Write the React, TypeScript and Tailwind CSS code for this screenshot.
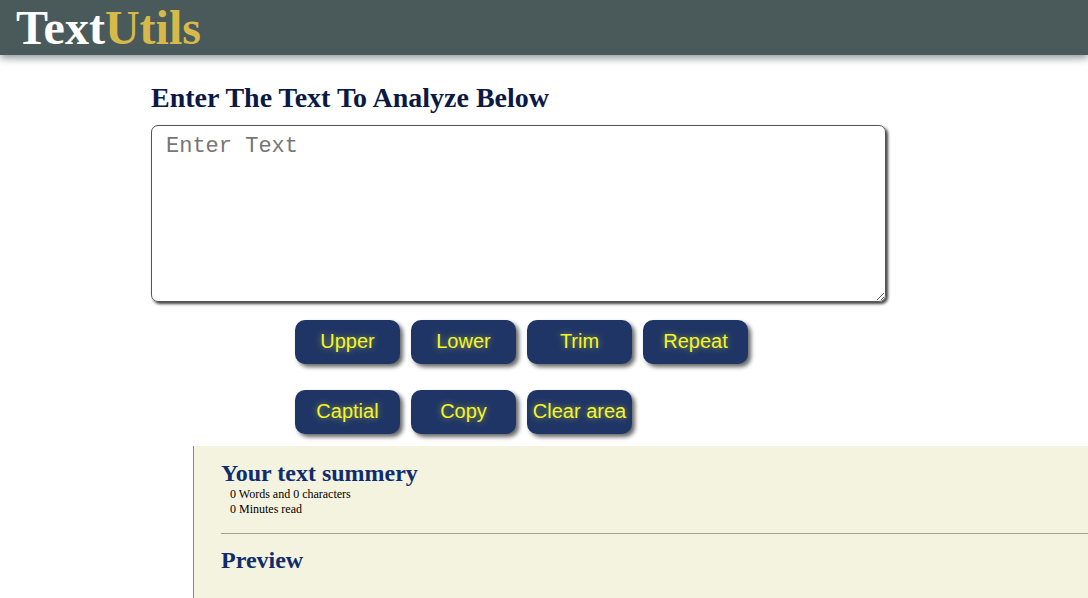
export default function App() {
  const row1 = ["Upper", "Lower", "Trim", "Repeat"];
  const row2 = ["Captial", "Copy", "Clear area"];

  return (
    <div className="min-h-[598px] bg-white font-['Liberation_Serif',serif]">
      <header className="flex h-[55px] items-center bg-[#4a5a5a] pl-[16px] shadow-[0_3px_8px_rgba(60,80,80,0.6)]">
        <h1 className="text-[48px] font-bold leading-none">
          <span className="text-white">Text</span>
          <span className="text-[#d6b94a]">Utils</span>
        </h1>
      </header>

      <main className="pl-[151px]">
        <h2 className="mt-[27px] text-[28px] font-bold leading-[31px] text-[#0b1a45]">
          Enter The Text To Analyze Below
        </h2>
        <textarea
          placeholder="Enter Text"
          className="mt-[12px] block h-[177px] w-[735px] rounded-[7px] border border-[#555] px-[14px] py-[4px] font-['Liberation_Mono',monospace] text-[22px] shadow-[2px_2px_3px_rgba(0,0,0,0.75)] outline-none placeholder:text-[#767676]"
        />

        <div className="mt-[18px] flex flex-col gap-[26px] pl-[144px]">
          <ButtonRow labels={row1} />
          <ButtonRow labels={row2} />
        </div>
      </main>

      <section className="ml-[193px] mt-[12px] border-l border-[#8a8a80] bg-[#f4f3df] pb-[26px] pl-[27px] pt-[13px]">
        <h3 className="text-[24px] font-bold leading-[28px] text-[#0f2d6e]">
          Your text summery
        </h3>
        <div className="pl-[9px] text-[12px] leading-[15px] text-black">
          <p>0 Words and 0 characters</p>
          <p>0 Minutes read</p>
        </div>
        <hr className="mt-[16px] border-t border-[#a09f98]" />
        <h3 className="mt-[12px] text-[24px] font-bold leading-[28px] text-[#0f2d6e]">
          Preview
        </h3>
      </section>
    </div>
  );
}

function ButtonRow({ labels }: { labels: string[] }) {
  return (
    <div className="flex gap-[11px]">
      {labels.map((l) => (
        <button
          key={l}
          className="h-[44px] w-[105px] rounded-[10px] bg-[#1f3566] pb-[2px] font-['Liberation_Sans',sans-serif] text-[20px] text-[#f4f52a] shadow-[3px_3px_4px_rgba(0,0,0,0.6)] [text-shadow:0_0_6px_rgba(245,245,60,0.55)]"
        >
          {l}
        </button>
      ))}
    </div>
  );
}
